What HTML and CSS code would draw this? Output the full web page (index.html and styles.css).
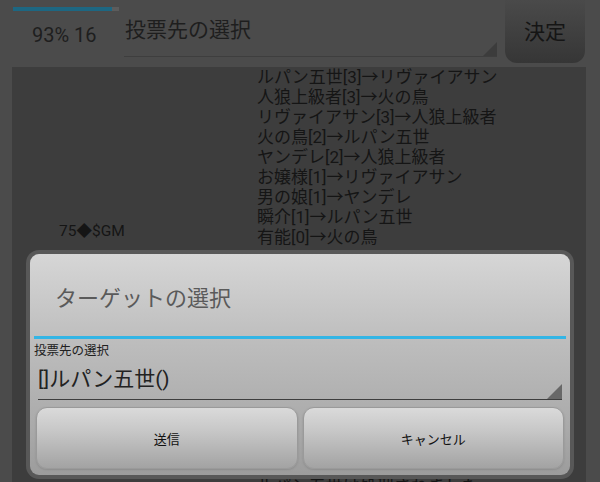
FILE: index.html
```html
<!DOCTYPE html>
<html lang="ja">
<head>
    <meta charset="UTF-8">
    <meta name="viewport" content="width=device-width, initial-scale=1.0">
    <title>投票</title>
    <link rel="stylesheet" href="styles.css">
</head>
<body>
    <header class="topbar">
        <div class="status">
            <div class="progress"><div class="progress-fill"></div></div>
            <div class="status-text">93% 16</div>
        </div>
        <div class="spinner top-spinner">
            <span>投票先の選択</span>
            <span class="arrow"></span>
        </div>
        <button class="decide">決定</button>
    </header>

    <main class="panel">
        <div class="gm">75◆$GM</div>
        <div class="votes">
            <p>ルパン五世[3]→リヴァイアサン</p>
            <p>人狼上級者[3]→火の鳥</p>
            <p>リヴァイアサン[3]→人狼上級者</p>
            <p>火の鳥[2]→ルパン五世</p>
            <p>ヤンデレ[2]→人狼上級者</p>
            <p>お嬢様[1]→リヴァイアサン</p>
            <p>男の娘[1]→ヤンデレ</p>
            <p>瞬介[1]→ルパン五世</p>
            <p>有能[0]→火の鳥</p>
            <p class="gap">ルパン五世は処刑されました</p>
        </div>

        <!-- ダイアログ -->
        <div class="dialog">
            <div class="dialog-inner">
                <div class="dialog-title">ターゲットの選択</div>
                <div class="dialog-body">
                    <div class="field-label">投票先の選択</div>
                    <div class="spinner dialog-spinner">
                        <span>[]ルパン五世()</span>
                        <span class="arrow"></span>
                    </div>
                    <div class="dialog-buttons">
                        <button>送信</button>
                        <button>キャンセル</button>
                    </div>
                </div>
            </div>
        </div>
    </main>
</body>
</html>
```

FILE: styles.css
```css
* {
    box-sizing: border-box;
    margin: 0;
    padding: 0;
}
body {
    font-family: Roboto, "Noto Sans CJK JP", sans-serif;
    background-color: #4b4b4b;
    color: #151515;
    width: 600px;
    height: 482px;
    overflow: hidden;
}
.topbar {
    display: flex;
    height: 67px;
}
.status {
    width: 124px;
    padding: 7px 0 0 13px;
}
.progress {
    width: 106px;
    height: 4px;
    background-color: #5c5c5c;
}
.progress-fill {
    width: 99px;
    height: 4px;
    background-color: #1d6782;
}
.status-text {
    font-size: 20px;
    margin: 12px 0 0 19px;
    color: #1e1e1e;
}
.spinner {
    position: relative;
    display: flex;
    align-items: center;
    border-bottom: 1px solid #3e3e3e;
}
.top-spinner {
    width: 373px;
    height: 57px;
    padding: 0 0 0 1px;
    font-size: 21px;
    color: #1e1e1e;
}
.arrow {
    position: absolute;
    right: 0;
    bottom: 0;
    width: 0;
    height: 0;
    border-left: 14px solid transparent;
    border-bottom: 14px solid #3c3c3c;
}
.decide {
    width: 80px;
    height: 63px;
    margin-left: 8px;
    border: none;
    border-radius: 0 0 12px 12px;
    background: linear-gradient(#4a4a4a, #363636);
    font-family: inherit;
    font-size: 21px;
    color: #151515;
    padding-bottom: 4px;
}
.panel {
    position: relative;
    display: flex;
    margin: 0 14px 0 12px;
    height: 415px;
    background-color: #3d3d3d;
}
.gm {
    width: 245px;
    padding: 151px 0 0 47px;
    font-size: 15.5px;
}
.votes {
    font-size: 17px;
    line-height: 20px;
    white-space: nowrap;
}
.votes .gap {
    margin-top: 229px;
}
.dialog {
    position: absolute;
    left: 14px;
    top: 183px;
    width: 548px;
    height: 229px;
    padding: 4px;
    border-radius: 13px;
    background-color: #585858;
}
.dialog-inner {
    height: 100%;
    border-radius: 9px;
    overflow: hidden;
    display: flex;
    flex-direction: column;
    background: linear-gradient(#d6d6d6, #bdbdbd 40%, #a9a9a9 80%, #9c9c9c);
}
.dialog-title {
    height: 85px;
    padding: 26px 0 0 21px;
    font-size: 22px;
    color: #5a5a5a;
    border-bottom: 3px solid #33b5e5;
    margin: 0 4px;
}
.dialog-body {
    padding: 0 4px;
}
.field-label {
    font-size: 12.5px;
    margin-top: 1px;
    color: #202020;
}
.dialog-spinner {
    margin: 2px 4px 0 4px;
    height: 39px;
    font-size: 21px;
    color: #222;
    padding-bottom: 6px;
}
.dialog-spinner .arrow {
    border-left-width: 15px;
    border-bottom: 15px solid #686868;
}
.dialog-buttons {
    display: flex;
    gap: 5px;
    margin: 7px 2px 0 2px;
}
.dialog-buttons button {
    flex: 1;
    height: 62px;
    border: 1px solid #9a9a9a;
    border-radius: 11px;
    background: linear-gradient(#dadada, #c6c6c6 40%, #a3a3a3);
    box-shadow: 0 1px 2px #8c8c8c;
    font-family: inherit;
    font-size: 13px;
    color: #111;
}
```
